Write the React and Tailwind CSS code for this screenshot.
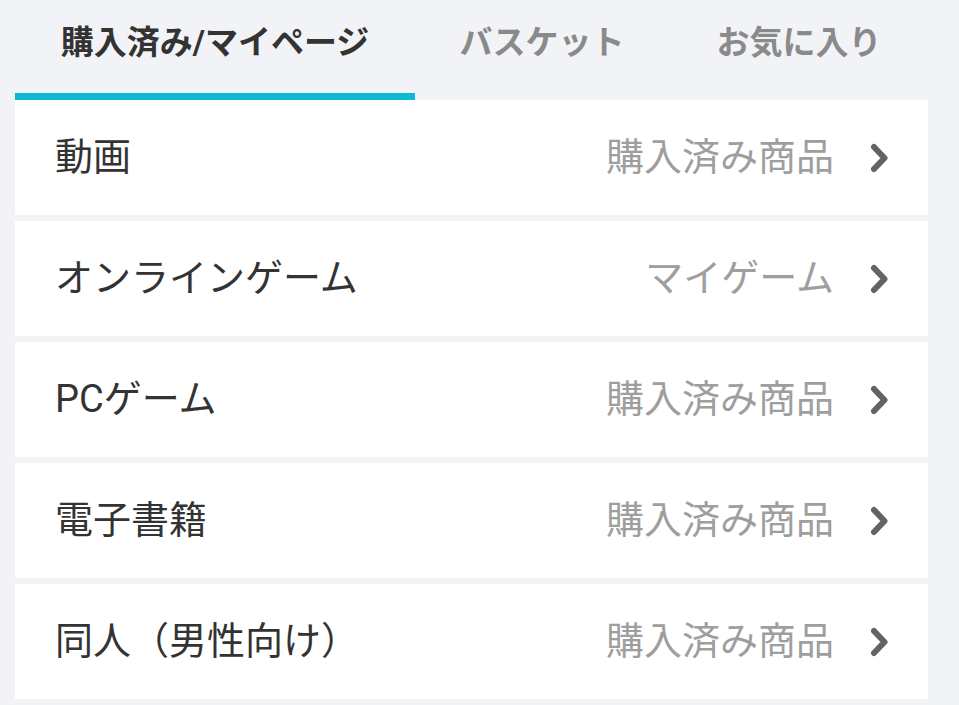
import React from "react";

const tabs = [
    { label: "購入済み/マイページ", width: "w-[400px]", active: true },
    { label: "バスケット", width: "w-[254px]", active: false },
    { label: "お気に入り", width: "w-[260px]", active: false },
];

const rows = [
    { title: "動画", link: "購入済み商品" },
    { title: "オンラインゲーム", link: "マイゲーム" },
    { title: "PCゲーム", link: "購入済み商品" },
    { title: "電子書籍", link: "購入済み商品" },
    { title: "同人（男性向け）", link: "購入済み商品" },
];

const Chevron = () => (
    <svg width="18" height="30" viewBox="0 0 18 30" className="shrink-0">
        <polyline
            points="4,4 14.5,15 4,26"
            fill="none"
            stroke="#636363"
            strokeWidth="6"
            strokeLinecap="round"
            strokeLinejoin="round"
        />
    </svg>
);

const App = () => {
    return (
        <div
            className="w-[959px] h-[705px] overflow-hidden bg-[#f2f3f7] pl-[15px]"
            style={{ fontFamily: "Roboto, 'Noto Sans CJK JP', sans-serif" }}
        >
            <div className="flex">
                {tabs.map((tab) => (
                    <div key={tab.label} className={`${tab.width} flex flex-col`}>
                        <div
                            className={`h-[93px] flex items-center justify-center pb-[8px] text-[33px] font-bold ${
                                tab.active ? "text-[#333333]" : "text-[#8a8a8a]"
                            }`}
                        >
                            {tab.label}
                        </div>
                        <div className={`h-[7px] ${tab.active ? "bg-[#0cb9d3]" : ""}`} />
                    </div>
                ))}
            </div>

            <div className="w-[913px] flex flex-col gap-[6px]">
                {rows.map((row) => (
                    <div
                        key={row.title}
                        className="h-[115px] shrink-0 bg-white flex items-center justify-between pl-[40px] pr-[40px]"
                    >
                        <span className="text-[38px] text-[#333333]">{row.title}</span>
                        <div className="flex items-center gap-[36px]">
                            <span className="text-[38px] text-[#9e9e9e]">{row.link}</span>
                            <Chevron />
                        </div>
                    </div>
                ))}
                {/* next row, only its top edge is visible */}
                <div className="h-[115px] shrink-0 bg-white" />
            </div>
        </div>
    );
};

export default App;
